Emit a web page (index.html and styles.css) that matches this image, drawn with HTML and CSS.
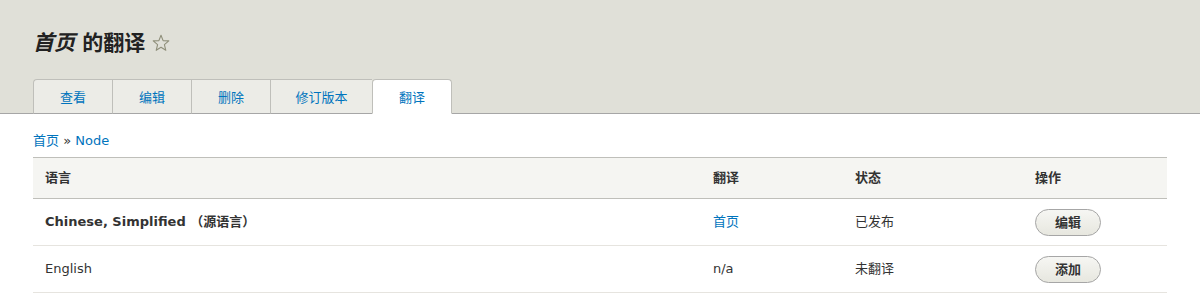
FILE: index.html
```html
<!DOCTYPE html>
<html lang="zh-CN">
<head>
<meta charset="utf-8">
<title>首页 的翻译</title>
<link rel="stylesheet" href="styles.css">
</head>
<body>
<header class="content-header">
  <div class="title-row">
    <h1 class="page-title"><em>首页</em> 的翻译</h1>
    <svg class="star" width="18" height="18" viewBox="0 0 18 18" aria-hidden="true">
      <path d="M9 1.2 L11.1 6.6 L16.8 6.9 L12.4 10.6 L13.8 16.3 L9 13.2 L4.2 16.3 L5.6 10.6 L1.2 6.9 L6.9 6.6 Z" fill="none" stroke="#8f8f7a" stroke-width="1.1" stroke-linejoin="round"/>
    </svg>
  </div>
  <nav class="tabs">
    <a class="tab first" href="#">查看</a>
    <a class="tab" href="#">编辑</a>
    <a class="tab" href="#">删除</a>
    <a class="tab" href="#">修订版本</a>
    <a class="tab active" href="#">翻译</a>
  </nav>
</header>
<main class="page">
  <div class="breadcrumb"><a href="#">首页</a> » <a href="#">Node</a></div>
  <table class="overview">
    <thead>
      <tr>
        <th class="c-lang">语言</th>
        <th class="c-trans">翻译</th>
        <th class="c-status">状态</th>
        <th class="c-ops">操作</th>
      </tr>
    </thead>
    <tbody>
      <tr>
        <td class="strong">Chinese, Simplified （源语言）</td>
        <td><a href="#">首页</a></td>
        <td>已发布</td>
        <td><a class="button" href="#">编辑</a></td>
      </tr>
      <tr>
        <td>English</td>
        <td>n/a</td>
        <td>未翻译</td>
        <td><a class="button" href="#">添加</a></td>
      </tr>
    </tbody>
  </table>
</main>
</body>
</html>
```
FILE: styles.css
```css
html, body {
  margin: 0;
  padding: 0;
  background: #fff;
}
body {
  font-family: "DejaVu Sans", "Noto Sans CJK SC", sans-serif;
  font-size: 13px;
  line-height: 19px;
  color: #333;
}
a {
  color: #0074bd;
  text-decoration: none;
}
.content-header {
  background: #e0e0d8;
  border-bottom: 1px solid #a6a6a6;
  padding: 31px 33px 0;
}
.title-row {
  display: flex;
  align-items: center;
  gap: 7px;
  height: 25px;
}
.page-title {
  margin: 0;
  font-size: 21px;
  line-height: 25px;
  font-weight: bold;
  color: #222;
}
.page-title em {
  font-style: italic;
}
.star {
  display: block;
  margin-top: -1px;
}
.tabs {
  display: flex;
  margin-top: 23px;
  margin-bottom: -1px;
}
.tab {
  box-sizing: border-box;
  height: 35px;
  min-width: 79px;
  padding: 1px 24.5px 0;
  display: flex;
  align-items: center;
  justify-content: center;
  background: #ecece7;
  border-top: 1px solid #bfbfba;
  border-left: 1px solid #bfbfba;
  border-bottom: 1px solid #a6a6a6;
  color: #0074bd;
  line-height: 19px;
}
.tab.first {
  border-top-left-radius: 4px;
}
.tab.active {
  min-width: 80px;
  background: #fff;
  border-right: 1px solid #bfbfba;
  border-bottom: 1px solid #fff;
  border-radius: 4px 4px 0 0;
}
.page {
  padding: 0 33px;
}
.breadcrumb {
  margin-top: 17px;
  margin-bottom: 7px;
  line-height: 19px;
  color: #333;
}
.overview {
  width: 100%;
  border-collapse: collapse;
}
.overview thead tr {
  background: #f5f5f2;
  border-top: 1px solid #bfbfba;
  border-bottom: 1px solid #bfbfba;
}
.overview th {
  text-align: left;
  font-weight: bold;
  color: #333;
  padding: 0 12px;
  height: 40px;
  line-height: 20px;
}
.overview td {
  padding: 0 12px;
  height: 46px;
  line-height: 20px;
  vertical-align: middle;
}
.overview tbody tr {
  border-bottom: 1px solid #e6e4df;
}
.c-lang { width: 644px; }
.c-trans { width: 118px; }
.c-status { width: 156px; }
.c-ops { width: 120px; }
.strong {
  font-weight: bold;
}
.button {
  display: inline-block;
  padding: 4px 19px;
  line-height: 17px;
  border: 1px solid #a6a6a6;
  border-radius: 20em;
  background-color: #f2f1eb;
  background-image: linear-gradient(to bottom, #f6f6f3, #e7e7df);
  color: #333;
  font-weight: bold;
  text-shadow: 0 1px rgba(255, 255, 255, 0.6);
  vertical-align: middle;
}
```
